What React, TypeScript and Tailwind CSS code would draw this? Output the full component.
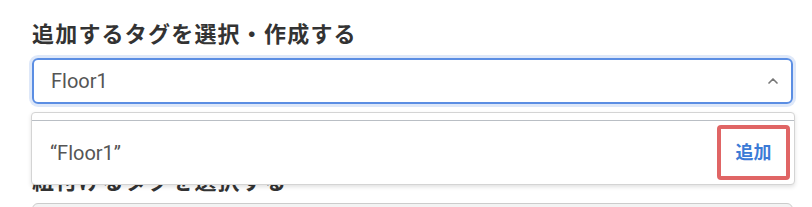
import { ChevronUp } from "lucide-react";

const font = { fontFamily: 'Roboto, "Noto Sans CJK JP", sans-serif' };

export default function App() {
	return (
		<div
			className="w-[812px] h-[207px] overflow-hidden bg-white pl-[32px] pr-[19px] pt-[20px]"
			style={font}
		>
			<div className="relative">
				<h2 className="text-[22px] leading-[30px] font-bold tracking-[1.2px] text-[#333]">
					追加するタグを選択・作成する
				</h2>
				<div className="mt-[8px] h-[46px] flex items-center justify-between rounded-[6px] border-2 border-[#5b8ee3] shadow-[0_0_0_3px_rgba(91,142,227,0.2)] pl-[17px] pr-[10px]">
					<span className="text-[20px] text-[#555]">Floor1</span>
					<ChevronUp className="w-[16px] h-[16px] text-[#777]" strokeWidth={2.5} />
				</div>

				{/* next field, mostly under the dropdown */}
				<h2 className="mt-[63px] text-[22px] leading-[30px] font-bold tracking-[1.2px] text-[#333]">
					紐付けるタグを選択する
				</h2>
				<div className="mt-[6px] h-[46px] rounded-[6px] border border-[#ccc] bg-[#f3f3f3]" />

				{/* dropdown menu */}
				<div className="absolute left-[-1px] right-[-2px] top-[92px] h-[73px] rounded-[4px] border border-[#d4d4d4] bg-white shadow-[0_2px_4px_rgba(0,0,0,0.12)]">
					<div className="mt-[7px] border-t border-[#b9bec4] h-[64px] flex items-center justify-between pl-[18px] pr-[4px]">
						<span className="text-[20px] text-[#555]">“Floor1”</span>
						<button className="w-[73px] h-[55px] rounded-[4px] border-[4px] border-[#e06565] flex items-center justify-center text-[18px] font-bold text-[#3b7bd6]">
							追加
						</button>
					</div>
				</div>
			</div>
		</div>
	);
}
